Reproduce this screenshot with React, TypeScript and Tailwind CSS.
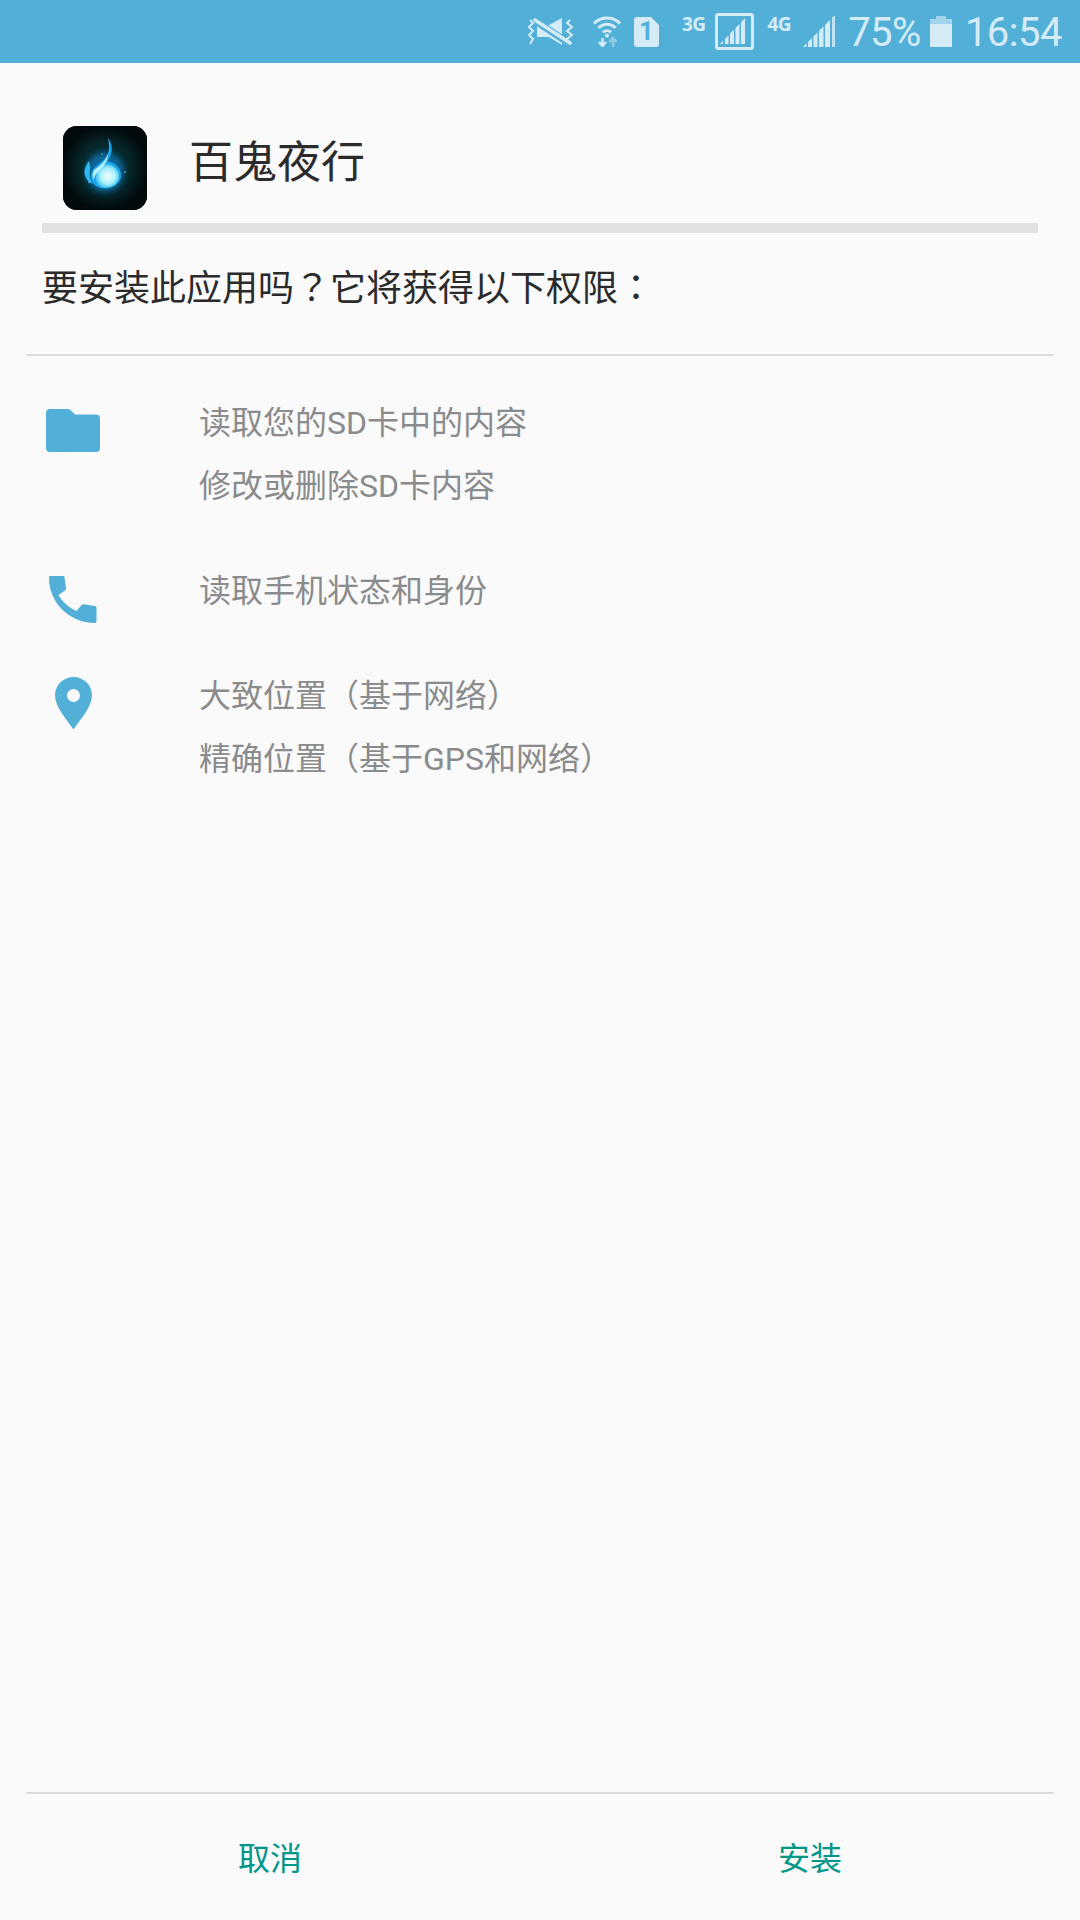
import React from 'react'

const permissions = [
  { icon: 'folder', lines: ['读取您的SD卡中的内容', '修改或删除SD卡内容'] },
  { icon: 'phone', lines: ['读取手机状态和身份'] },
  { icon: 'pin', lines: ['大致位置（基于网络）', '精确位置（基于GPS和网络）'] },
]

function SignalBars() {
  return (
    <svg width="32" height="31" viewBox="0 0 32 31" fill="#d5ecf6">
      <path d="M0 31l3.500-3.500V31z" />
      <path d="M5 31v-5l4-4v9z" />
      <path d="M10.500 31V20.500l4-4V31z" />
      <path d="M16 31V15l4.500-4.500V31z" />
      <path d="M22 31V9l5-5v27z" />
      <path d="M29 31V1l3-1v31z" opacity="0.85" />
    </svg>
  )
}

function StatusBar() {
  return (
    <div className="h-[63px] bg-[#52b0d8] flex items-center justify-end pr-[18px] text-[#d5ecf6] shrink-0">
      {/* mute + vibrate */}
      <svg width="48" height="28" viewBox="0 0 48 28" className="mr-[18px]" fill="none">
        <path d="M10 7h12L35 0v27L22 19H10z" fill="#d5ecf6" />
        <path d="M7 2l36 24" stroke="#52b0d8" strokeWidth="7" />
        <path d="M8 2l35 23" stroke="#d5ecf6" strokeWidth="3.500" strokeLinecap="round" />
        <path d="M3 2l3 3-4 4 4 4-4 4 4 4-3 5" stroke="#d5ecf6" strokeWidth="2" />
        <path d="M43 2l-3 3 5 4-5 4 5 4-5 4 3 5" stroke="#d5ecf6" strokeWidth="2" />
      </svg>
      {/* wifi */}
      <svg width="28" height="31" viewBox="0 0 28 31" className="mr-[13px]" fill="none" stroke="#d5ecf6" strokeWidth="3">
        <path d="M1 7.500c7-7.500 19-7.500 26 0" />
        <path d="M5.500 12c5-5 12-5 17 0" />
        <path d="M10 16.500c2.500-2.500 5.500-2.500 8 0" />
        <circle cx="14" cy="19.500" r="2" fill="#d5ecf6" stroke="none" />
        <path d="M9.500 22v8M6 26l3.500 4 3.500-4" strokeWidth="2.500" />
        <path d="M20 31v-9M16.500 26l3.500-4 3.500 4" stroke="#8fcbe5" strokeWidth="2.500" />
      </svg>
      {/* sim 1 */}
      <div className="relative w-[25px] h-[30px] mr-[23px]">
        <svg width="25" height="30" viewBox="0 0 25 30">
          <path d="M3 0h14l8 8v19a3 3 0 0 1-3 3H3a3 3 0 0 1-3-3V3a3 3 0 0 1 3-3z" fill="#d5ecf6" />
        </svg>
        <span className="absolute inset-0 flex items-center justify-center text-[25px] font-bold text-[#52b0d8] font-['Roboto',sans-serif] leading-none">1</span>
      </div>
      <span className="text-[19px] font-bold font-['Open_Sans',sans-serif] leading-none self-start mt-[15px] mr-[9px] tracking-[-0.5px]">3G</span>
      <div className="w-[39px] h-[37px] border-[3px] border-[#d5ecf6] rounded-[3px] mr-[14px] flex items-end justify-center pb-[3px]">
        <svg width="28" height="26" viewBox="0 0 28 26" fill="#d5ecf6">
          <path d="M0 26l3-3v3z" />
          <path d="M5 26v-5l3.500-3.500V26z" />
          <path d="M10 26V15.500l4-4V26z" />
          <path d="M15.500 26V10l4-4v20z" />
          <path d="M21 26V4.500L25 0v26z" />
        </svg>
      </div>
      <span className="text-[19px] font-bold font-['Open_Sans',sans-serif] leading-none self-start mt-[15px] mr-[12px] tracking-[-0.5px]">4G</span>
      <div className="mr-[13px]">
        <SignalBars />
      </div>
      <span className="text-[40px] leading-none font-['Roboto',sans-serif] tracking-[-0.5px] mr-[9px] mt-[2px]">75%</span>
      <svg width="22" height="31" viewBox="0 0 22 31" className="mr-[13px]" fill="#d5ecf6">
        <path d="M6 0h10v3H6z" opacity="0.6" />
        <path d="M0 3h22v5H0z" opacity="0.6" />
        <path d="M0 8h22v23H0z" />
      </svg>
      <span className="text-[40px] leading-none font-['Roboto',sans-serif] tracking-[-0.5px] mt-[2px]">16:54</span>
    </div>
  )
}

function AppIcon() {
  return (
    <div className="w-[84px] h-[84px] rounded-[14px] bg-[#020a0c] overflow-hidden shrink-0">
      <svg width="84" height="84" viewBox="0 0 84 84">
        <defs>
          <radialGradient id="aura" cx="50%" cy="50%" r="50%">
            <stop offset="0%" stopColor="#0a3a42" />
            <stop offset="60%" stopColor="#06262a" />
            <stop offset="100%" stopColor="#020a0c" />
          </radialGradient>
          <radialGradient id="ball" cx="52%" cy="52%" r="55%">
            <stop offset="0%" stopColor="#f4feff" />
            <stop offset="60%" stopColor="#a8f0fc" />
            <stop offset="100%" stopColor="#35bdf0" />
          </radialGradient>
          <filter id="soft">
            <feGaussianBlur stdDeviation="3" />
          </filter>
          <filter id="softer">
            <feGaussianBlur stdDeviation="0.500" />
          </filter>
        </defs>
        <rect width="84" height="84" fill="url(#aura)" />
        <ellipse cx="42" cy="46" rx="19" ry="20" fill="#0e7fc4" opacity="0.7" filter="url(#soft)" />
        {/* flame */}
        <path d="M45 12c3 4 4.500 9 3.500 14-.8 4-2.500 7-4 9.500 6 .5 12 5 13.500 11.500 1.500 9-7 16-17 15.500-9-.5-14-7-13-14 .5-4 3-7 7-10 5-3.500 9-7 10.500-13 .8-4 .5-9-.5-13.500z" fill="#1ba6ec" filter="url(#softer)" />
        <path d="M26 35c-4 5-6 11-3 17 1.500 3 4 5 7 6-3-4-4-9-3-13 .3-3 .3-6-1-10z" fill="#2db7f2" filter="url(#softer)" />
        <path d="M33 51c.5-6 5-11 11-13 7 1 12 6 12 11.500 0 7.500-7 12.500-14 12-6-.5-9.500-5-9-10.500z" fill="url(#ball)" filter="url(#softer)" />
        <path d="M31 44c6-4 11-8 14-16-.5 8-5 14-11 19-2 2-3 4-3 7-2-3-1.500-7 0-10z" fill="#b5f4ff" filter="url(#softer)" />
        <circle cx="62" cy="46" r="0.800" fill="#8fe8fb" />
        <circle cx="26" cy="56" r="0.800" fill="#8fe8fb" />
        <circle cx="39" cy="28" r="0.700" fill="#5fd0f0" />
      </svg>
    </div>
  )
}

function PermissionIcon({ icon }: { icon: string }) {
  if (icon === 'folder') {
    return (
      <svg width="54" height="43" viewBox="0 0 54 43" className="mt-[17px]" fill="#52b0d8">
        <path d="M4 0h17c2 0 3 .5 4 1.500L29 5.500h21a4 4 0 0 1 4 4V39a4 4 0 0 1-4 4H4a4 4 0 0 1-4-4V4a4 4 0 0 1 4-4z" />
      </svg>
    )
  }
  if (icon === 'phone') {
    return (
      <svg width="48" height="47" viewBox="0 0 48 47" className="mt-[16px]" fill="#52b0d8">
        <path d="M1 0h13c1 0 1.500.5 1.500 1.500l1.500 11c0 1-.5 1.500-1 2L9.500 19c4 7 10 12.500 18 16l5-6c.5-.5 1.500-1 2.500-.8l11 1.800c1 0 1.500 1 1.500 2V45c0 1.500-1 2-2 2C21 47 0 27 0 2c0-1 0-2 1-2z" />
      </svg>
    )
  }
  return (
    <svg width="37" height="53" viewBox="0 0 37 53" className="mt-[12px]" fill="#52b0d8">
      <path fillRule="evenodd" d="M18.500 0C8.300 0 0 8.200 0 18.300 0 30 12 43 18.500 52.500 25 43 37 30 37 18.300 37 8.200 28.700 0 18.500 0zm0 12a6.500 6.500 0 1 1 0 13 6.500 6.500 0 0 1 0-13z" />
    </svg>
  )
}

export default function App() {
  return (
    <div className="w-[1080px] h-[1920px] bg-[#fafafa] flex flex-col font-['Roboto','Noto_Sans_CJK_SC',sans-serif]">
      <StatusBar />

      {/* app header */}
      <div className="flex items-center pl-[63px] pt-[63px]">
        <AppIcon />
        <h1 className="ml-[42px] mb-[10px] text-[44px] leading-none font-normal text-[#2b2b2b]">百鬼夜行</h1>
      </div>
      <div className="mx-[42px] mt-[13px] h-[10px] bg-[#e1e1e1]" />

      <p className="ml-[42px] mt-[29px] h-[46px] text-[36px] leading-[46px] text-[#2b2b2b]">
        要安装此应用吗<span className="font-['Noto_Sans_CJK_TC',sans-serif]">？</span>它将获得以下权限<span className="font-['Noto_Sans_CJK_TC',sans-serif]">：</span>
      </p>

      <div className="mx-[26px] mt-[46px] h-[2px] bg-[#dcdcdc]" />

      {/* permissions */}
      <div className="flex-1 pt-[36px]">
        {permissions.map((p) => (
          <div key={p.icon} className="flex mb-[42px]">
            <div className="w-[199px] shrink-0">
              <div className="w-[146px] flex justify-center items-start">
                <PermissionIcon icon={p.icon} />
              </div>
            </div>
            <div>
              {p.lines.map((line) => (
                <p key={line} className="text-[32px] leading-[63px] text-[#8a8b8c]">{line}</p>
              ))}
            </div>
          </div>
        ))}
      </div>

      {/* bottom buttons */}
      <div className="mx-[26px] h-[2px] bg-[#dcdcdc]" />
      <div className="h-[126px] pt-[4px] flex items-center text-[#009688] text-[32px]">
        <div className="w-[540px] text-center">取消</div>
        <div className="w-[540px] text-center">安装</div>
      </div>
    </div>
  )
}
